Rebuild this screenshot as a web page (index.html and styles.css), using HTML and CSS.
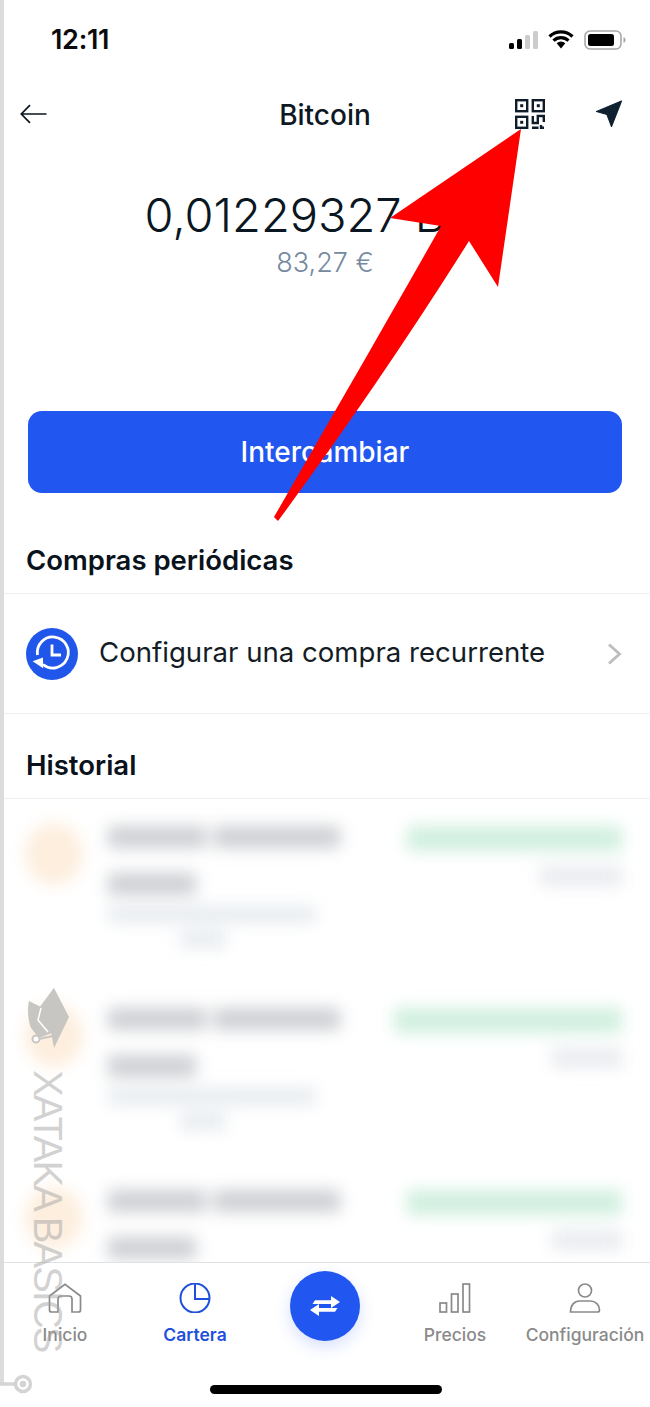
FILE: index.html
```html
<!DOCTYPE html>
<html lang="es">
<head>
<meta charset="utf-8">
<title>Bitcoin</title>
<link rel="stylesheet" href="styles.css">
</head>
<body>
<div class="page">
  <div class="status">
    <span class="time">12:11</span>
    <div class="status-icons">
      <svg class="signal" width="29" height="18" viewBox="0 0 29 18"><rect x="0" y="12" width="5" height="6" rx="1.5" fill="#000"/><rect x="8" y="8" width="5" height="10" rx="1.5" fill="#000"/><rect x="16" y="4" width="5" height="14" rx="1.5" fill="#ccc"/><rect x="24" y="0" width="5" height="18" rx="1.5" fill="#ccc"/></svg>
      <svg class="wifi" width="26" height="19" viewBox="0 0 26 19"><path d="M1.5 6.5a16.5 16.5 0 0 1 23 0M5.5 10.7a10.8 10.8 0 0 1 15 0" fill="none" stroke="#000" stroke-width="3.2"/><path d="M8.7 13.2a6.2 6.2 0 0 1 8.6 0L13 18.5z" fill="#000"/></svg>
      <svg class="battery" width="42" height="20" viewBox="0 0 42 20"><rect x="1" y="1" width="36" height="18" rx="5" fill="none" stroke="#a8a8a8" stroke-width="1.6"/><rect x="4" y="4" width="26" height="12" rx="2.5" fill="#000"/><path d="M39.5 7c1.5.5 2 1.700 2 3s-.5 2.500-2 3z" fill="#a8a8a8"/></svg>
    </div>
  </div>

  <header class="topbar">
    <svg class="back" width="27" height="20" viewBox="0 0 27 20"><path d="M26.500 10H1.500M10 1.200 1.300 10 10 18.800" fill="none" stroke="#0a1520" stroke-width="1.700"/></svg>
    <h1 class="title">Bitcoin</h1>
    <div class="top-actions">
      <svg class="qr" width="30" height="30" viewBox="0 0 30 30" fill="none" stroke="#0f1c2a" stroke-width="2.400"><rect x="1.200" y="1.200" width="11" height="11"/><rect x="17.800" y="1.200" width="11" height="11"/><rect x="1.200" y="17.800" width="11" height="11"/><rect x="5.200" y="5.200" width="3" height="3" fill="#0f1c2a" stroke="none"/><rect x="21.800" y="5.200" width="3" height="3" fill="#0f1c2a" stroke="none"/><rect x="5.200" y="21.800" width="3" height="3" fill="#0f1c2a" stroke="none"/><path d="M17.800 17v7h5v-7h6v6M17 28.800h6.500M26 26v2.800h3"/></svg>
      <svg class="plane" width="28" height="28" viewBox="0 0 28 28"><path d="M26.500 1 1.500 11.500 12 14.500 16.500 26.500z" fill="#0f2030" stroke="#0f2030" stroke-width="1.200" stroke-linejoin="round"/></svg>
    </div>
  </header>

  <section class="balance">
    <div class="amount">0,01229327 BTC</div>
    <div class="fiat">83,27 €</div>
  </section>

  <button class="cta">Intercambiar</button>

  <h2 class="section-title first">Compras periódicas</h2>
  <div class="recurring">
    <span class="recurring-icon">
      <svg width="52" height="52" viewBox="0 0 52 52"><circle cx="26" cy="26" r="26" fill="#2156ea"/><path d="M11.500 27A15.500 15.500 0 1 1 17 36.500" fill="none" stroke="#fff" stroke-width="2.800"/><path d="M8 31h11l-3.500 10z" fill="#fff" transform="rotate(-20 14 36)"/><path d="M26 16.500V27h9" fill="none" stroke="#fff" stroke-width="2.800"/></svg>
    </span>
    <span class="recurring-text">Configurar una compra recurrente</span>
    <svg class="chevron" width="15" height="22" viewBox="0 0 15 22"><path d="M2 1.500 12.500 11 2 20.500" fill="none" stroke="#bdbdbd" stroke-width="2.800"/></svg>
  </div>

  <h2 class="section-title">Historial</h2>
  <div class="history">
    <div class="tx">
      <span class="tx-avatar"></span>
      <div class="tx-main"><span class="bar dark w232"></span><span class="bar dark w88"></span><span class="bar faint w208"></span><span class="bar faint w46 indent"></span></div>
      <div class="tx-side"><span class="bar green w215"></span><span class="bar pale w82"></span></div>
    </div>
    <div class="tx">
      <span class="tx-avatar"></span>
      <div class="tx-main"><span class="bar dark w232"></span><span class="bar dark w88"></span><span class="bar faint w208"></span><span class="bar faint w46 indent"></span></div>
      <div class="tx-side"><span class="bar green w228"></span><span class="bar pale w70"></span></div>
    </div>
    <div class="tx">
      <span class="tx-avatar"></span>
      <div class="tx-main"><span class="bar dark w232"></span><span class="bar dark w88"></span><span class="bar faint w208"></span><span class="bar faint w46 indent"></span></div>
      <div class="tx-side"><span class="bar green w215"></span><span class="bar pale w70"></span></div>
    </div>
  </div>

  <nav class="tabs">
    <div class="tab">
      <svg width="34" height="30" viewBox="0 0 34 30" fill="none" stroke="#8a8a8a" stroke-width="1.700"><path d="M1.500 13 17 1.200 32.500 13v14a2 2 0 0 1-2 2H24V16a3 3 0 0 0-3-3h-8a3 3 0 0 0-3 3v13H3.500a2 2 0 0 1-2-2z"/></svg>
      <span>Inicio</span>
    </div>
    <div class="tab active">
      <svg width="32" height="30" viewBox="0 0 32 30" fill="none" stroke="#1f50dc" stroke-width="2"><circle cx="16" cy="15" r="14.500"/><path d="M16 .5V16h15"/></svg>
      <span>Cartera</span>
    </div>
    <div class="tab fab-cell">
      <span class="fab">
        <svg width="32" height="26" viewBox="0 0 32 26" fill="#fff"><path d="M6 7.200h16V3l9 6-9 6v-4H3.500z"/><path d="M26 18.800H10V23l-9-6 9-6v4h18.500z"/></svg>
      </span>
    </div>
    <div class="tab">
      <svg width="32" height="30" viewBox="0 0 32 30" fill="none" stroke="#8a8a8a" stroke-width="1.700"><rect x="1" y="20" width="6.500" height="9"/><rect x="12.500" y="11" width="6.500" height="18"/><rect x="24" y="1" width="6.500" height="28"/></svg>
      <span>Precios</span>
    </div>
    <div class="tab">
      <svg width="32" height="30" viewBox="0 0 32 30" fill="none" stroke="#8a8a8a" stroke-width="1.700"><circle cx="16" cy="7.500" r="6.500"/><path d="M1.500 29c0-7 4-11 9-11h11c5 0 9 4 9 9 0 1.500-.8 2-2 2z"/></svg>
      <span>Configuración</span>
    </div>
  </nav>

  <div class="home-bar"></div>

  <div class="rail"></div>
  <svg class="rail-end" width="34" height="24" viewBox="0 0 34 24" fill="none" stroke="#d4d4d4" stroke-width="3.500"><path d="M0 12h16"/><circle cx="23" cy="12" r="7.500"/><circle cx="23" cy="12" r="1.500"/></svg>
  <svg class="mark" width="44" height="62" viewBox="0 0 44 62"><path d="M27 1 42 30 27 61 24 45 12 21z" fill="#c8c6c3"/><path d="M27 1 14 20 2 14c-2 8-1 19 2 27l8 10 13-5z" fill="#c8c6c3"/><path d="M14 21 11 33l10 12" fill="none" stroke="#fff" stroke-width="1.500"/><circle cx="9" cy="52" r="3.500" fill="#fff" stroke="#c8c6c3" stroke-width="2"/><path d="M12 52l14-3" stroke="#c8c6c3" stroke-width="2"/></svg>
  <div class="watermark">XATAKA BASICS</div>

  <svg class="pointer" width="650" height="600" viewBox="0 0 650 600"><path d="M521 129 390 218 441 226C385 325 327 425 274 517L278 521C345 430 410 335 469 241L498 287z" fill="#fe0000"/></svg>
</div>
</body>
</html>
```
FILE: styles.css
```css
* { box-sizing: border-box; }
html, body { margin: 0; padding: 0; background: #fff; }
body { font-family: Inter, "Liberation Sans", sans-serif; color: #0a121c; }

.page {
  position: relative;
  width: 650px;
  height: 1407px;
  overflow: hidden;
  display: flex;
  flex-direction: column;
  background: #fff;
}

/* status bar */
.status {
  height: 80px;
  flex: none;
  display: flex;
  justify-content: space-between;
  padding: 24px 24px 0 51px;
}
.time { font-size: 27px; line-height: 31px; font-weight: 600; color: #0b0b0b; letter-spacing: -0.3px; }
.status-icons { display: flex; gap: 9px; align-items: flex-start; padding-top: 6px; }
.signal { margin: 1px 1px 0 0; }
.wifi { margin-right: 1px; }

/* top bar */
.topbar {
  height: 70px;
  flex: none;
  display: grid;
  grid-template-columns: 1fr auto 1fr;
  align-items: center;
  padding: 0 27px;
}
.back { margin: -2px 0 0 -7px; }
.title { margin: 0; font-size: 28px; line-height: 34px; font-weight: 500; color: #0d1824; }
.top-actions { display: flex; justify-content: flex-end; gap: 50px; align-items: center; margin-top: -2px; }

/* balance */
.balance { flex: none; padding-top: 35px; text-align: center; }
.amount { font-size: 47px; line-height: 60px; font-weight: 300; color: #0a1622; white-space: nowrap; }
.fiat { margin-top: 2px; font-size: 27px; line-height: 32px; font-weight: 300; color: #75899f; }

/* main button */
.cta {
  flex: none;
  display: block;
  width: 594px;
  height: 82px;
  margin: 132px 0 0 28px;
  border: 0;
  border-radius: 14px;
  background: #2156f0;
  color: #fff;
  font-family: inherit;
  font-size: 28px;
  font-weight: 500;
}

/* sections */
.section-title {
  flex: none;
  margin: 0;
  padding: 34px 26px 16px;
  font-size: 27.5px;
  line-height: 34px;
  font-weight: 600;
  color: #0a121c;
  border-bottom: 1px solid #eef0f4;
}
.section-title.first { padding-top: 50px; padding-bottom: 16px; }

.recurring {
  flex: none;
  height: 120px;
  display: flex;
  align-items: center;
  padding: 0 28px 0 26px;
  border-bottom: 1px solid #eef0f4;
}
.recurring-icon { display: block; width: 52px; height: 52px; flex: none; }
.recurring-icon svg { display: block; }
.recurring-text { flex: 1; margin: -3px 0 0 21px; font-size: 27.6px; font-weight: 400; color: #141c26; white-space: nowrap; }
.chevron { flex: none; }

/* blurred history */
.history {
  flex: 1;
  min-height: 0;
  overflow: hidden;
  filter: blur(8px);
  padding-top: 27px;
}
.tx {
  height: 182px;
  display: flex;
  padding: 0 28px 0 25px;
}
.tx-avatar {
  flex: none;
  width: 58px;
  height: 62px;
  margin-top: -3px;
  border-radius: 50%;
  background: #fdeedd;
}
.tx-main { flex: none; width: 260px; margin-left: 25px; display: flex; flex-direction: column; align-items: flex-start; }
.tx-side { flex: 1; display: flex; flex-direction: column; align-items: flex-end; }
.bar { display: block; height: 22px; flex: none; }
.bar.dark { background: #cdcfd3; }
.bar.dark + .bar.dark { margin-top: 25px; }
.bar.dark.w232 { background: linear-gradient(90deg, #cdcfd3 0 42%, #f4f4f5 42% 46%, #cdcfd3 46% 100%); }
.bar.faint { background: #e7ebef; height: 17px; margin-top: 11px; }
.bar.faint.indent { margin-top: 8px; margin-left: 72px; }
.bar.green { background: #d0efdf; height: 25px; }
.bar.pale { background: #e9ebef; height: 20px; margin-top: 15px; }
.w232 { width: 232px; }
.w88 { width: 88px; }
.w208 { width: 208px; }
.w46 { width: 46px; }
.w215 { width: 215px; }
.w228 { width: 228px; }
.w82 { width: 82px; }
.w70 { width: 70px; }

/* tabs */
.tabs {
  flex: none;
  height: 84px;
  display: grid;
  grid-template-columns: repeat(5, 130px);
  padding-top: 20px;
  border-top: 1px solid #dfe1e4;
  background: #fff;
  position: relative;
}
.tab {
  display: flex;
  flex-direction: column;
  align-items: center;
  color: #8a8a8a;
  font-size: 17.5px;
  font-weight: 500;
  white-space: nowrap;
}
.tab svg { display: block; }
.tab span { display: block; margin-top: 11px; line-height: 22px; }
.tab.active { color: #1f50dc; font-weight: 600; }
.fab-cell { margin-top: -12px; }
.tab .fab {
  width: 70px;
  height: 70px;
  margin: 0;
  border-radius: 50%;
  background: #2156f0;
  display: flex;
  align-items: center;
  justify-content: center;
  box-shadow: 0 6px 16px rgba(33, 86, 240, 0.18);
}

.home-bar {
  flex: none;
  width: 232px;
  height: 9px;
  margin: 39px 0 13px 210px;
  border-radius: 5px;
  background: #000;
}

/* overlays */
.rail { position: absolute; left: 0; top: 0; width: 4px; height: 1385px; background: #dcdcdc; }
.rail-end { position: absolute; left: 0; top: 1372px; }
.mark { position: absolute; left: 27px; top: 987px; }
.watermark {
  position: absolute;
  left: 28px;
  top: 1070px;
  writing-mode: vertical-rl;
  font-family: "Liberation Sans", sans-serif;
  font-size: 40px;
  line-height: 40px;
  letter-spacing: -2px;
  color: rgba(165, 165, 165, 0.5);
  white-space: nowrap;
}
.pointer { position: absolute; left: 0; top: 0; }
```
